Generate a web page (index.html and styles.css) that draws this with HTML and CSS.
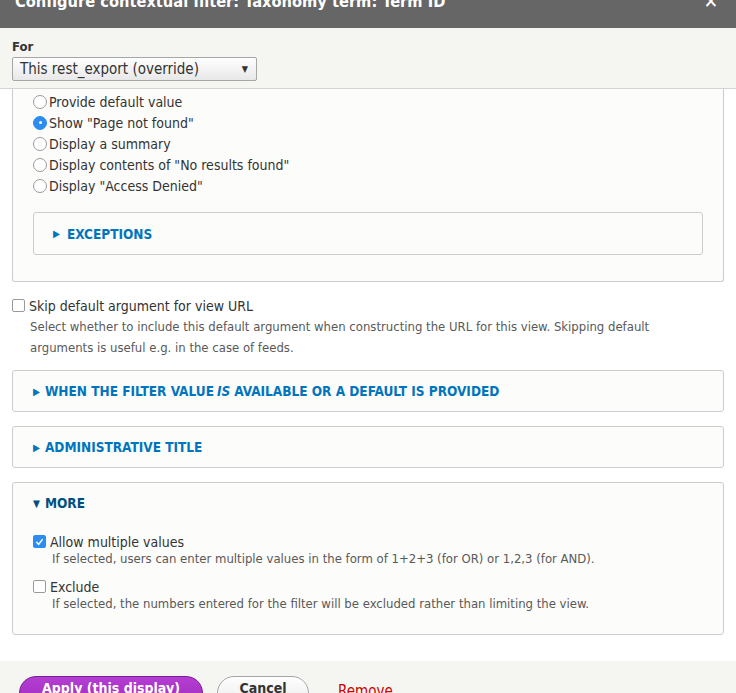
FILE: index.html
```html
<!DOCTYPE html>
<html>
<head>
<meta charset="utf-8">
<link rel="stylesheet" href="styles.css">
</head>
<body>
<div class="dialog">
  <div class="titlebar">
    <h1 class="title">Configure contextual filter: Taxonomy term: Term ID</h1>
    <span class="close">✕</span>
  </div>
  <div class="override">
    <label class="for-label">For</label>
    <div class="select"><span>This rest_export (override)</span><span class="caret">▼</span></div>
  </div>
  <div class="content">
    <div class="fieldset">
      <div class="radios">
        <div class="radio-row"><span class="radio"></span>Provide default value</div>
        <div class="radio-row"><span class="radio checked"></span>Show "Page not found"</div>
        <div class="radio-row"><span class="radio"></span>Display a summary</div>
        <div class="radio-row"><span class="radio"></span>Display contents of "No results found"</div>
        <div class="radio-row"><span class="radio"></span>Display "Access Denied"</div>
      </div>
      <div class="details inner"><div class="summary"><span class="tri">▶</span>EXCEPTIONS</div></div>
    </div>

    <div class="item">
      <div class="check-row"><span class="checkbox"></span>Skip default argument for view URL</div>
      <div class="desc">Select whether to include this default argument when constructing the URL for this view. Skipping default arguments is useful e.g. in the case of feeds.</div>
    </div>

    <div class="details first"><div class="summary"><span class="tri">▶</span>WHEN THE FILTER VALUE <em>IS</em> AVAILABLE OR A DEFAULT IS PROVIDED</div></div>
    <div class="details"><div class="summary"><span class="tri">▶</span>ADMINISTRATIVE TITLE</div></div>
    <div class="details open">
      <div class="summary"><span class="tri down">▼</span>MORE</div>
      <div class="more-body">
        <div class="check-row"><span class="checkbox checked"><svg viewBox="0 0 12 12" width="12" height="12"><path d="M3 6.3 L5.1 8.6 L9 3.4" fill="none" stroke="#fff" stroke-width="1.6" stroke-linecap="round" stroke-linejoin="round"/></svg></span>Allow multiple values</div>
        <div class="desc small">If selected, users can enter multiple values in the form of 1+2+3 (for OR) or 1,2,3 (for AND).</div>
        <div class="check-row second"><span class="checkbox"></span>Exclude</div>
        <div class="desc small">If selected, the numbers entered for the filter will be excluded rather than limiting the view.</div>
      </div>
    </div>
  </div>
  <div class="buttons">
    <button class="btn primary">Apply (this display)</button>
    <button class="btn secondary">Cancel</button>
    <a class="remove">Remove</a>
  </div>
</div>
</body>
</html>
```
FILE: styles.css
```css
html, body {
  margin: 0;
  padding: 0;
  background: #fff;
}
body {
  font-family: "DejaVu Sans Condensed", "Liberation Sans Narrow", "DejaVu Sans", sans-serif;
  color: #333;
  font-size: 14px;
  width: 736px;
  height: 693px;
  overflow: hidden;
}
.dialog {
  display: flex;
  flex-direction: column;
  height: 693px;
}
.titlebar {
  height: 28px;
  background: #666;
  display: flex;
  justify-content: space-between;
  align-items: flex-start;
  overflow: hidden;
  padding: 0 18px 0 15px;
  flex: none;
}
.title {
  margin: -12px 0 0 0;
  font-size: 16.3px;
  font-weight: bold;
  color: #fff;
  line-height: 28px;
}
.close {
  color: #fff;
  font-weight: bold;
  font-size: 19px;
  line-height: 19px;
  margin-top: -8px;
}
.override {
  background: #f5f5f2;
  border-bottom: 1px solid #d4d4d0;
  padding: 10px 12px 7px;
  height: 43px;
  flex: none;
}
.for-label {
  display: block;
  font-size: 13px;
  font-weight: bold;
  color: #333;
  line-height: 17px;
  margin-bottom: 2px;
}
.select {
  height: 22px;
  border: 1px solid #a6a6a6;
  border-radius: 2px;
  background: linear-gradient(#fefefe, #e8e8e8);
  display: flex;
  align-items: center;
  justify-content: space-between;
  padding: 0 8px 0 7px;
  width: 228px;
  font-size: 15px;
  color: #333;
}
.caret {
  font-size: 9px;
  color: #333;
}
.content {
  flex: 1;
  padding: 0 12px;
  overflow: hidden;
}
.fieldset {
  background: #fcfcfa;
  border: 1px solid #ccc;
  border-top: none;
  border-radius: 0 0 3px 3px;
  padding: 2px 20px 26px 20px;
}
.radios {
  margin-bottom: 16px;
}
.radio-row {
  display: flex;
  align-items: center;
  height: 21px;
  font-size: 14px;
  color: #333;
}
.radio {
  width: 12px;
  height: 12px;
  border: 1px solid #9a9a9a;
  border-radius: 50%;
  background: #fff;
  margin-right: 2px;
  flex: none;
  position: relative;
}
.radio.checked {
  background: #2d8cf0;
  border-color: #2d8cf0;
}
.radio.checked::after {
  content: "";
  position: absolute;
  left: 4.5px;
  top: 4.5px;
  width: 3px;
  height: 3px;
  border-radius: 50%;
  background: #fff;
}
.details {
  background: #fcfcfa;
  border: 1px solid #ccc;
  border-radius: 3px;
  margin-top: 14px;
}
.details.inner {
  margin-top: 0;
}
.details.first {
  margin-top: 12px;
}
.summary {
  height: 40px;
  display: flex;
  align-items: center;
  padding-left: 20px;
  font-size: 13.5px;
  font-weight: bold;
  color: #0074bd;
  text-transform: uppercase;
}
.details.inner .summary {
  height: 41px;
  padding-left: 19px;
}
.details.inner .tri {
  margin-right: 7px;
}
.summary em {
  font-style: italic;
  margin: 0 4px 0 3px;
}
.tri {
  font-size: 10px;
  margin-right: 5px;
}
.details.open .summary {
  color: #004f80;
}
.item {
  margin-top: 15px;
}
.check-row {
  display: flex;
  align-items: center;
  height: 17px;
  font-size: 14px;
  color: #333;
}
.checkbox {
  width: 11px;
  height: 11px;
  border: 1px solid #9a9a9a;
  border-radius: 2px;
  background: #fff;
  margin-right: 4px;
  flex: none;
  display: flex;
  align-items: center;
  justify-content: center;
}
.checkbox.checked {
  background: #2d8cf0;
  border-color: #2d8cf0;
}
.desc {
  font-size: 13px;
  color: #595959;
  line-height: 21px;
  padding-left: 18px;
  margin-top: 2px;
  padding-right: 40px;
}
.more-body {
  padding: 10px 20px 22px 20px;
}
.desc.small {
  line-height: 16px;
  padding-left: 19px;
  margin-top: 1px;
}
.check-row.second {
  margin-top: 11px;
}
.buttons {
  background: #f5f5f2;
  height: 17px;
  padding: 15px 19px 0;
  display: flex;
  align-items: flex-start;
  flex: none;
  overflow: hidden;
}
.btn {
  font-family: inherit;
  font-size: 14px;
  font-weight: bold;
  height: 34px;
  border-radius: 18px;
  padding: 0 0 10px 0;
  border: 1px solid #a6a6a6;
  background: linear-gradient(#fefefe, #e8e8e8);
  color: #333;
  margin-right: 14px;
  line-height: 18px;
  white-space: nowrap;
  text-align: center;
  display: block;
  flex: none;
  box-sizing: border-box;
}
.btn.primary {
  background: linear-gradient(#b43cd2, #9e2dbd);
  border-color: #7a1f93;
  color: #fff;
  width: 184px;
}
.btn.secondary {
  width: 92px;
}
.remove {
  color: #c00;
  font-size: 15px;
  margin-left: 15px;
  margin-top: 5px;
  line-height: 20px;
}
```
